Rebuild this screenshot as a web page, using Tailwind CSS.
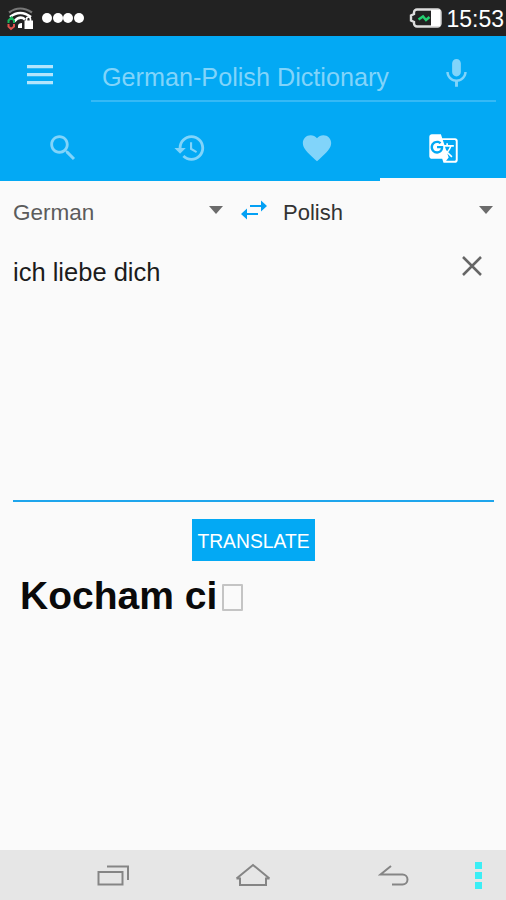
<!DOCTYPE html>
<html lang="en">
<head>
  <meta charset="UTF-8" />
  <title>German-Polish Dictionary</title>
  <script src="https://cdn.jsdelivr.net/npm/@tailwindcss/browser@4"></script>
</head>
<body class="w-[506px] h-[900px] flex flex-col overflow-hidden bg-[#fafafa] font-['Liberation_Sans',Arial,sans-serif]">

  <!-- Status bar -->
  <div class="h-9 shrink-0 flex items-center justify-between bg-[#222] text-white pl-[6px] pr-[2px]">
    <div class="flex items-center gap-[8px]">
      <svg width="28" height="26" viewBox="0 0 28 26" fill="none" class="mt-[2px]">
        <path d="M3 6.500Q14 -1.500 26 6.500" stroke="#777" stroke-width="2.200" />
        <path d="M4 11Q14 3 25 11M8 15.500Q14 9 19 13.500" stroke="#fff" stroke-width="2.600" />
        <path d="M12 22v-2q0-3 4-3v5z" fill="#fff" />
        <path d="M20.500 15v-1.500q0-2.500 2-2.500t2 2.500V15" stroke="#fff" stroke-width="1.700" />
        <path d="M18.500 14.500H27V23h-8.500z" fill="#fff" />
        <path d="M2.500 17v-2.500L5.500 11.500l2.500 3V17" stroke="#19b45b" stroke-width="2" />
        <path d="M2.500 18v2.500l2.500 2.500 3-2.500V18" stroke="#e0524d" stroke-width="2" />
      </svg>
      <div class="flex gap-[0.500px]">
        <span class="size-[10px] rounded-full bg-white"></span>
        <span class="size-[10px] rounded-full bg-white"></span>
        <span class="size-[10px] rounded-full bg-white"></span>
        <span class="size-[10px] rounded-full bg-white"></span>
      </div>
    </div>
    <div class="flex items-center gap-[4px]">
      <svg width="34" height="22" viewBox="0 0 34 22" fill="none">
        <path d="M9 2.500h20.500a3 3 0 0 1 3 3v11a3 3 0 0 1-3 3H9a3 3 0 0 1-3-3v-1.500l-3-1.500v-5L6 7V5.500a3 3 0 0 1 3-3z" stroke="#ddd" stroke-width="2.400" />
        <path d="M23 3h9v16h-9z" fill="#fff" />
        <path d="M10.500 12.500l4.500-3 3 3.500 3.500-3" stroke="#24cf70" stroke-width="2.500" />
      </svg>
      <span class="text-[23px] leading-9 pt-[2px]">15:53</span>
    </div>
  </div>

  <!-- App bar -->
  <header class="h-[145px] shrink-0 flex flex-col bg-[#03a9f4]">
    <div class="h-[79px] flex">
      <div class="w-[91px] pl-[27px] pt-[28px]">
        <svg width="26" height="21" viewBox="0 0 26 21" fill="#b3e5fc">
          <path d="M0 1h26v3.200H0zM0 9h26v3.200H0zM0 17h26v3.200H0z" />
        </svg>
      </div>
      <div class="w-[405px] h-[66px] flex justify-between border-b-2 border-[#35b9f6] pl-[11px] pr-[22px]">
        <span class="text-[25.200px] leading-[30px] pt-[26px] text-[#81d4fa] whitespace-nowrap">German-Polish Dictionary</span>
        <svg class="mt-[20px]" width="35" height="35" viewBox="0 0 24 24" fill="#81d4fa">
          <path d="M12 14c1.660 0 2.990-1.340 2.990-3L15 5c0-1.660-1.340-3-3-3S9 3.340 9 5v6c0 1.660 1.340 3 3 3zm5.300-3c0 3-2.540 5.100-5.300 5.100S6.700 14 6.700 11H5c0 3.410 2.720 6.230 6 6.720V21h2v-3.280c3.280-.48 6-3.300 6-6.720h-1.700z" />
        </svg>
      </div>
    </div>

    <!-- Tabs -->
    <div class="grow grid grid-cols-4">
      <div class="flex justify-center pt-[16px]">
        <svg width="34" height="34" viewBox="0 0 24 24" fill="#81d4fa">
          <path d="M15.500 14h-.79l-.28-.27C15.410 12.590 16 11.110 16 9.500 16 5.910 13.090 3 9.500 3S3 5.910 3 9.500 5.910 16 9.500 16c1.610 0 3.090-.59 4.230-1.570l.27.28v.79l5 4.990L20.490 19l-4.990-5zm-6 0C7.010 14 5 11.990 5 9.500S7.010 5 9.500 5 14 7.010 14 9.500 11.990 14 9.500 14z" />
        </svg>
      </div>
      <div class="flex justify-center pt-[16px] pl-px">
        <svg width="34" height="34" viewBox="0 0 24 24" fill="#81d4fa">
          <path d="M13 3c-4.970 0-9 4.030-9 9H1l3.890 3.890.07.140L9 12H6c0-3.870 3.130-7 7-7s7 3.130 7 7-3.130 7-7 7c-1.930 0-3.680-.79-4.940-2.060l-1.420 1.420C8.270 19.990 10.510 21 13 21c4.970 0 9-4.030 9-9s-4.030-9-9-9zm-1 5v5l4.280 2.540.72-1.210-3.500-2.080V8H12z" />
        </svg>
      </div>
      <div class="flex justify-center pt-[16px] pl-px">
        <svg width="34" height="34" viewBox="0 0 24 24" fill="#81d4fa">
          <path d="M12 21.350l-1.450-1.320C5.400 15.360 2 12.280 2 8.500 2 5.420 4.420 3 7.500 3c1.740 0 3.410.81 4.500 2.090C13.090 3.810 14.760 3 16.500 3 19.580 3 22 5.420 22 8.500c0 3.780-3.400 6.860-8.550 11.540L12 21.350z" />
        </svg>
      </div>
      <div class="flex justify-center pt-[18px] pl-[2px] border-b-3 border-[#fafafa]">
        <svg width="31" height="31" viewBox="0 0 24 24" fill="#fff">
          <path d="M21 4H11l-1-3H3c-1.100 0-2 .9-2 2v15c0 1.100.9 2 2 2h8l1 3h9c1.100 0 2-.9 2-2V6c0-1.100-.9-2-2-2zM7 16c-2.760 0-5-2.240-5-5s2.240-5 5-5c1.350 0 2.480.5 3.350 1.300L9.030 8.570c-.38-.36-1.040-.78-2.030-.78-1.740 0-3.150 1.440-3.150 3.210S5.260 14.210 7 14.210c2.010 0 2.840-1.440 2.920-2.410H7v-1.710h4.680c.07.310.12.610.12 1.020C11.800 13.970 9.890 16 7 16zm6.170-5.420h3.700c-.43 1.250-1.110 2.430-2.050 3.470-.31-.35-.6-.72-.86-1.100l-.79-2.370zm8.330 9.920c0 .55-.45 1-1 1H14l2-2.500-1.040-3.100 3.100 3.100.92-.92-3.300-3.250.02-.02c1.130-1.250 1.930-2.690 2.400-4.220H20v-1.300h-4.530V8h-1.290v1.290h-1.440L11.460 5.500h9.040c.55 0 1 .45 1 1v14z" />
        </svg>
      </div>
    </div>
  </header>

  <main class="grow flex flex-col">
    <!-- Language pickers -->
    <div class="h-[62px] flex items-center px-[13px] text-[22px]">
      <span class="w-[196px] pt-[2px] text-[22.500px] text-[#5c5c5c]">German</span>
      <svg width="14" height="8" viewBox="0 0 14 8" fill="#6b6b6b" class="mb-[4px]"><path d="M0 0h14L7 8z" /></svg>
      <svg width="26" height="20" viewBox="0 0 26 20" fill="#03a0f4" class="ml-[18px] mb-[4px]">
        <path d="M9 5h11V.5L26 6l-6 5.500V7H9zM17 13H6V8.500L0 14l6 5.500V15h11z" />
      </svg>
      <span class="ml-[16px] grow text-[#333]">Polish</span>
      <svg width="14" height="8" viewBox="0 0 14 8" fill="#6b6b6b" class="mb-[4px]"><path d="M0 0h14L7 8z" /></svg>
    </div>

    <!-- Source text -->
    <div class="h-[259px] ml-[13px] mr-[12px] flex justify-between items-start border-b-2 border-[#1ea5ec] pr-[12px]">
      <span class="pt-[14px] text-[25.500px] leading-[30px] text-[#1c1c1c]">ich liebe dich</span>
      <svg width="20" height="20" viewBox="0 0 20 20" fill="none" stroke="#666" stroke-width="2.500" class="mt-[13px]">
        <path d="M1 1l18 18M19 1L1 19" />
      </svg>
    </div>

    <button class="w-[123px] h-[42px] mt-[17px] ml-[192px] bg-[#03a9f4] text-white text-[19.300px] leading-[38px] pt-[4px] whitespace-nowrap">TRANSLATE</button>

    <!-- Result -->
    <div class="flex items-start pl-[20px] pt-[12px]">
      <span class="text-[39px] leading-[46px] font-bold text-[#0a0a0a] whitespace-nowrap">Kocham ci</span>
      <span class="w-[21px] h-[27px] mt-[11px] ml-[5px] border-2 border-[#c4c4c4] rounded-[1px]"></span>
    </div>
  </main>

  <!-- Navigation bar -->
  <nav class="h-[50px] shrink-0 flex items-center bg-[#e6e6e6] pl-[97px]">
    <svg width="33" height="24" viewBox="0 0 33 24" fill="none" stroke="#858585" stroke-width="2">
      <path d="M1.500 9h24v12.500h-24zM10 3.500h21V17" />
    </svg>
    <svg width="36" height="24" viewBox="0 0 36 24" fill="none" stroke="#858585" stroke-width="2" class="ml-[105px]">
      <path d="M1.500 15.500L18 2l16.500 13.500M1.500 15.500H5V22h26v-6.500h3.500" />
    </svg>
    <svg width="33" height="24" viewBox="0 0 33 24" fill="none" stroke="#858585" stroke-width="2" class="ml-[107px]">
      <path d="M13 3L2.500 11.500h22a5 5 0 0 1 0 10H14" />
    </svg>
    <div class="ml-[64px] flex flex-col gap-[3px]">
      <span class="size-[7px] bg-[#3ceef5]"></span>
      <span class="size-[7px] bg-[#3ceef5]"></span>
      <span class="size-[7px] bg-[#3ceef5]"></span>
    </div>
  </nav>

</body>
</html>
